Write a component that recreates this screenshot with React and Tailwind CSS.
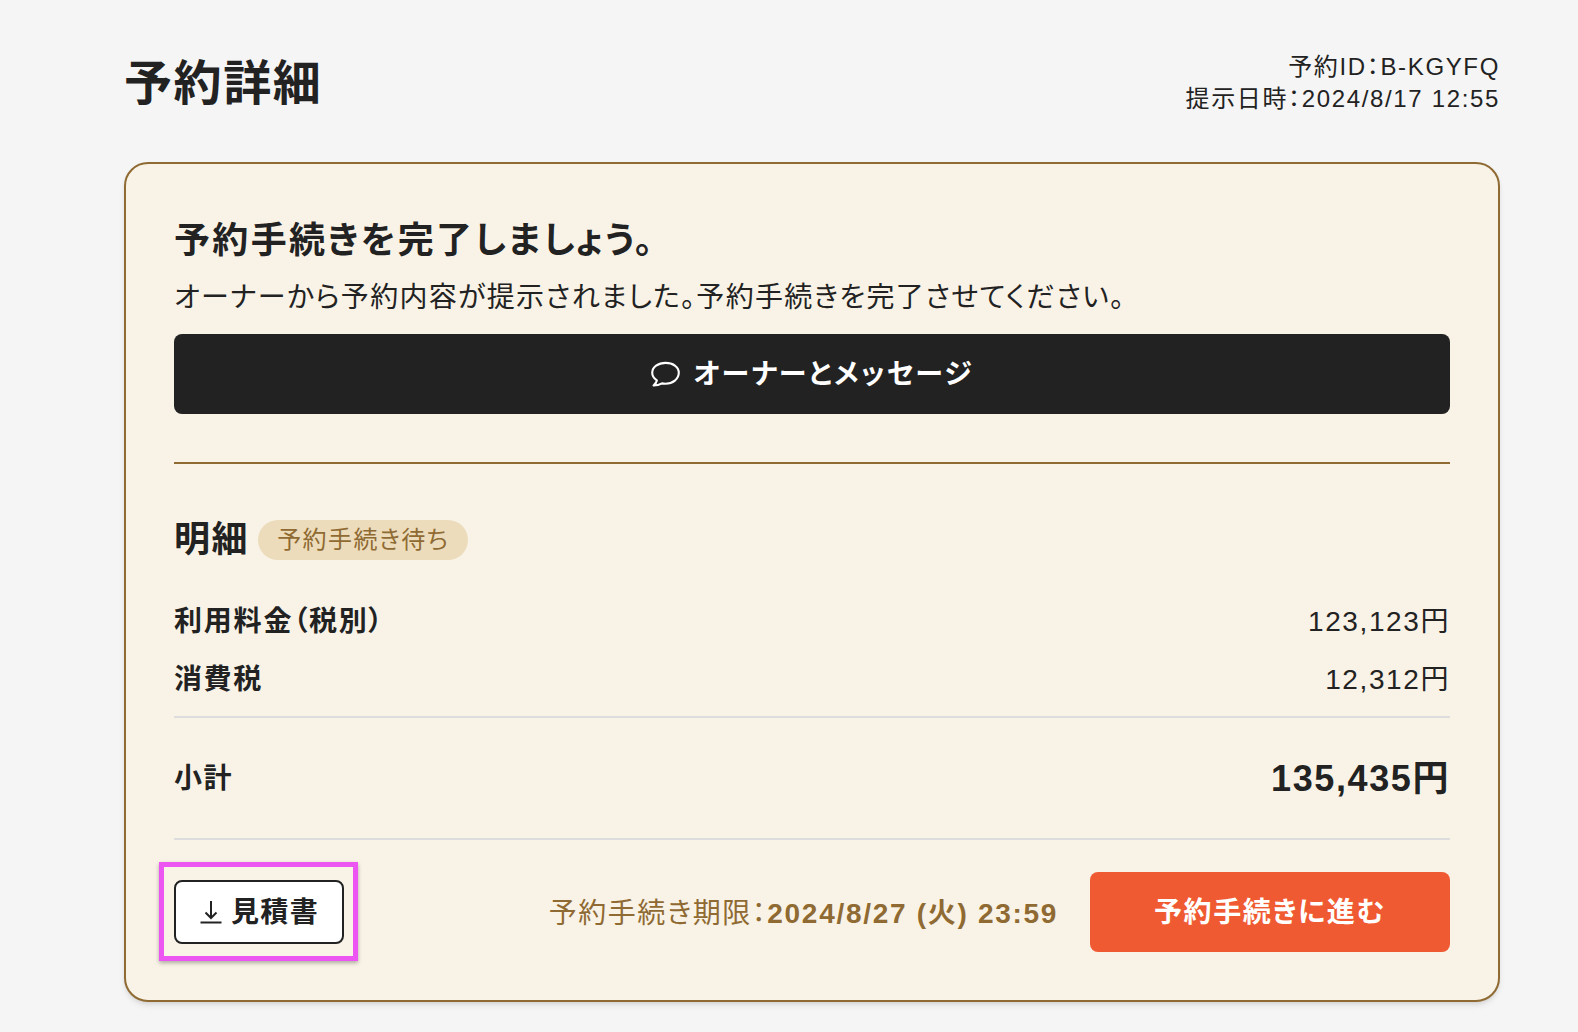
import React from 'react';

const font = "font-['Helvetica_Neue','Liberation_Sans','Noto_Sans_CJK_JP',sans-serif]";

const ChatIcon = () => (
  <svg width="31" height="27" viewBox="0 0 28 24" fill="none" stroke="currentColor" strokeWidth="1.9" strokeLinejoin="round">
    <path d="M14 1.5C7.4 1.5 2 5.3 2 10.5c0 2.9 1.6 5.2 4.2 6.9-.3 1.6-1.3 3.1-3 4.6 3 0 5.8-.9 7.6-2 1 .2 2.1.3 3.2.3 6.6 0 12-4.2 12-9.8S20.6 1.5 14 1.5Z" />
  </svg>
);

const DownloadIcon = () => (
  <svg width="24" height="24" viewBox="0 0 24 24" fill="none" stroke="currentColor" strokeWidth="2">
    <path d="M1.5 22.5h21" />
    <path d="M12 1v17" />
    <path d="M6.5 12.5 12 18l5.5-5.5" />
  </svg>
);

const App = () => {
  return (
    <div className={`min-h-[1032px] bg-[#f5f5f5] pl-[124px] pr-[78px] pt-[48px] text-[#222222] [font-feature-settings:'palt'] tracking-[1.6px] ${font}`}>
      <div className="flex justify-between items-start h-[114px]">
        <h1 className="text-[48px] leading-[72px] font-bold">予約詳細</h1>
        <div className="text-right text-[24px] leading-[32px] tracking-[1.65px] pt-[3px]">
          <p>予約ID：B-KGYFQ</p>
          <p>提示日時：2024/8/17 12:55</p>
        </div>
      </div>

      <div className="border-2 border-[#8f6a32] rounded-[24px] bg-[#f9f3e7] px-[48px] pt-[50px] pb-[48px] shadow-md">
        <h2 className="text-[36px] leading-[54px] font-bold tracking-[2.35px]">予約手続きを完了しましょう。</h2>
        <p className="text-[28px] leading-[42px] mt-[9px] tracking-[1.3px]">オーナーから予約内容が提示されました。予約手続きを完了させてください。</p>
        <button className="w-full h-[80px] mt-[15px] bg-[#222222] text-white rounded-[8px] flex items-center justify-center gap-[12px] text-[28px] font-bold tracking-[2.1px]">
          <ChatIcon />
          <span className="pt-[2px]">オーナーとメッセージ</span>
        </button>

        <div className="border-t-2 border-[#8f6a32] mt-[48px]" />

        <div className="flex items-center gap-[9px] mt-[56px]">
          <h3 className="text-[36px] leading-[40px] font-bold">明細</h3>
          <span className="bg-[#ecdcbb] text-[#8f6a32] rounded-full h-[40px] px-[19px] flex items-center text-[24px] tracking-[1.4px]">予約手続き待ち</span>
        </div>

        <div className="flex justify-between items-center h-[60px] mt-[32px] text-[28px]">
          <span className="font-bold tracking-[1.8px]">利用料金（税別）</span>
          <span>123,123円</span>
        </div>
        <div className="flex justify-between items-center h-[66px] pb-[8px] text-[28px] border-b-2 border-[#dddddd]">
          <span className="font-bold">消費税</span>
          <span>12,312円</span>
        </div>
        <div className="flex justify-between items-center h-[122px] pt-[2px] border-b-2 border-[#dddddd]">
          <span className="text-[28px] font-bold">小計</span>
          <span className="text-[36px] font-bold">135,435円</span>
        </div>

        <div className="flex items-center justify-between mt-[32px]">
          <div className="relative">
            <button className="w-[170px] h-[64px] bg-white border-2 border-[#222222] rounded-[8px] flex items-center justify-center gap-[8px] text-[28px] font-bold tracking-[1.4px]">
              <DownloadIcon />
              <span className="pt-[2px]">見積書</span>
            </button>
            <div className="absolute -left-[15px] -right-[14px] -top-[18px] -bottom-[17px] border-[5px] border-[#ec55f2] shadow-[0_2px_4px_rgba(0,0,0,0.3)] pointer-events-none" />
          </div>
          <div className="flex items-center gap-[32px]">
            <p className="text-[28px] text-[#8f6a32] pt-[3px] tracking-[1.5px]">予約手続き期限：<span className="font-bold tracking-[1.7px]">2024/8/27 (火) 23:59</span></p>
            <button className="w-[360px] h-[80px] pt-[2px] bg-[#f05a32] text-white rounded-[8px] text-[28px] font-bold">予約手続きに進む</button>
          </div>
        </div>
      </div>
    </div>
  );
};

export default App;
